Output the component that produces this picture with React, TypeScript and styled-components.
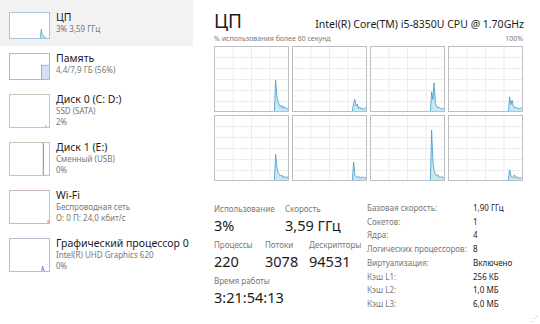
import styled, { createGlobalStyle } from "styled-components";

const GlobalStyle = createGlobalStyle`
  html, body {
    margin: 0;
    padding: 0;
    background: #ffffff;
  }
  body {
    font-family: "Noto Sans", "Open Sans", sans-serif;
    color: #1b1b1b;
  }
`;

type Thumb = "cpu" | "mem" | "disk0" | "disk1" | "wifi" | "gpu";

const sidebarItems: {
  kind: Thumb;
  title: string;
  lines: string[];
  border: string;
  selected?: boolean;
}[] = [
  { kind: "cpu", title: "ЦП", lines: ["3% 3,59 ГГц"], border: "#a9c4d8", selected: true },
  { kind: "mem", title: "Память", lines: ["4,4/7,9 ГБ (56%)"], border: "#b9b3cf" },
  { kind: "disk0", title: "Диск 0 (C: D:)", lines: ["SSD (SATA)", "2%"], border: "#bcc9b3" },
  { kind: "disk1", title: "Диск 1 (E:)", lines: ["Сменный (USB)", "0%"], border: "#bcc9b3" },
  { kind: "wifi", title: "Wi-Fi", lines: ["Беспроводная сеть", "О: 0 П: 24,0 кбит/с"], border: "#cdb9bd" },
  { kind: "gpu", title: "Графический процессор 0", lines: ["Intel(R) UHD Graphics 620", "0%"], border: "#c3b6cf" },
];

// last 12 seconds of each logical processor, percent
const charts: number[][] = [
  [0, 48, 24, 14, 10, 6, 9, 4, 7, 5, 3, 5],
  [0, 12, 18, 8, 11, 4, 6, 3, 5, 2, 4, 6],
  [0, 30, 18, 44, 12, 8, 5, 6, 4, 3, 5, 3],
  [0, 22, 10, 17, 8, 5, 6, 4, 5, 3, 4, 6],
  [0, 40, 20, 12, 9, 6, 8, 4, 6, 3, 5, 4],
  [0, 28, 8, 5, 4, 6, 3, 4, 5, 3, 4, 3],
  [0, 78, 30, 15, 10, 6, 8, 5, 4, 6, 3, 4],
  [0, 16, 7, 4, 5, 8, 3, 5, 4, 3, 4, 2],
];

const CoreChart = ({ data }: { data: number[] }) => {
  const w = 75;
  const h = 66;
  const step = w / 59;
  const start = 60 - data.length;
  const pts = data.map((v, i) => `${((start + i) * step).toFixed(2)},${(h - (v / 100) * h).toFixed(2)}`);
  const line = `0,${h} ${(start * step).toFixed(2)},${h} ${pts.join(" ")}`;
  return (
    <ChartBox>
      <svg width="100%" height="100%" viewBox={`0 0 ${w} ${h}`} preserveAspectRatio="none">
        <polygon points={`${line} ${w},${h}`} fill="#c9e7f4" />
        <polyline points={pts.join(" ")} fill="none" stroke="#3a97c2" strokeWidth="0.8" />
      </svg>
    </ChartBox>
  );
};

const ThumbDrawing = ({ kind }: { kind: Thumb }) => {
  switch (kind) {
    case "cpu":
      return (
        <svg width="100%" height="100%" viewBox="0 0 40 26" preserveAspectRatio="none">
          <polygon points="31,26 32,17 33,22 34,24 36,25 37,26" fill="#c9e7f4" />
          <polyline points="31,26 32,17 33,22 34,24 36,25 37,26" fill="none" stroke="#3a97c2" strokeWidth="0.7" />
        </svg>
      );
    case "mem":
      return (
        <svg width="100%" height="100%" viewBox="0 0 40 26" preserveAspectRatio="none">
          <rect x="32" y="11.5" width="8" height="14.5" fill="#d3e3f5" />
          <line x1="32.4" y1="11.5" x2="32.4" y2="26" stroke="#6f9fd6" strokeWidth="0.8" />
          <line x1="32" y1="11.8" x2="40" y2="11.8" stroke="#6f9fd6" strokeWidth="0.6" />
        </svg>
      );
    case "disk0":
      return (
        <svg width="100%" height="100%" viewBox="0 0 40 33" preserveAspectRatio="none">
          <rect x="36" y="31.5" width="1.2" height="1.5" fill="#7aa86a" />
        </svg>
      );
    case "disk1":
      return (
        <svg width="100%" height="100%" viewBox="0 0 40 32" preserveAspectRatio="none">
          <line x1="34.2" y1="0" x2="34.2" y2="32" stroke="#7db35a" strokeWidth="1.2" />
        </svg>
      );
    case "wifi":
      return (
        <svg width="100%" height="100%" viewBox="0 0 40 33" preserveAspectRatio="none">
          <rect x="38.6" y="30" width="0.9" height="3" fill="#c46a7a" />
        </svg>
      );
    case "gpu":
      return (
        <svg width="100%" height="100%" viewBox="0 0 40 32" preserveAspectRatio="none">
          <polygon points="32.5,32 33.5,27 34.5,31 36,32" fill="#e3d3f0" />
          <polyline points="32.5,32 33.5,27 34.5,31 36,32" fill="none" stroke="#9a63c4" strokeWidth="0.8" />
        </svg>
      );
  }
};

const details: [string, string][] = [
  ["Базовая скорость:", "1,90 ГГц"],
  ["Сокетов:", "1"],
  ["Ядра:", "4"],
  ["Логических процессоров:", "8"],
  ["Виртуализация:", "Включено"],
  ["Кэш L1:", "256 КБ"],
  ["Кэш L2:", "1,0 МБ"],
  ["Кэш L3:", "6,0 МБ"],
];

export default function App() {
  return (
    <>
      <GlobalStyle />
      <Page>
        <Sidebar>
          {sidebarItems.map((item) => (
            <SideItem key={item.title} $selected={!!item.selected}>
              <ThumbBox $border={item.border} $tall={item.lines.length > 1}>
                <ThumbDrawing kind={item.kind} />
              </ThumbBox>
              <SideText>
                <SideTitle>{item.title}</SideTitle>
                {item.lines.map((l) => (
                  <SideSub key={l}>{l}</SideSub>
                ))}
              </SideText>
            </SideItem>
          ))}
        </Sidebar>

        <Main>
          <Header>
            <Title>ЦП</Title>
            <Model>Intel(R) Core(TM) i5-8350U CPU @ 1.70GHz</Model>
          </Header>
          <Caption>
            <span>% использования более 60 секунд</span>
            <span>100%</span>
          </Caption>
          <ChartGrid>
            {charts.map((c, i) => (
              <CoreChart key={i} data={c} />
            ))}
          </ChartGrid>

          <Stats>
            <Live>
              <StatRow>
                <Stat $w={71}>
                  <StatLabel>Использование</StatLabel>
                  <StatValue>3%</StatValue>
                </Stat>
                <Stat>
                  <StatLabel>Скорость</StatLabel>
                  <StatValue>3,59 ГГц</StatValue>
                </Stat>
              </StatRow>
              <StatRow>
                <Stat $w={51}>
                  <StatLabel>Процессы</StatLabel>
                  <StatValue>220</StatValue>
                </Stat>
                <Stat $w={44}>
                  <StatLabel>Потоки</StatLabel>
                  <StatValue>3078</StatValue>
                </Stat>
                <Stat>
                  <StatLabel>Дескрипторы</StatLabel>
                  <StatValue>94531</StatValue>
                </Stat>
              </StatRow>
              <StatRow>
                <Stat>
                  <StatLabel>Время работы</StatLabel>
                  <StatValue>3:21:54:13</StatValue>
                </Stat>
              </StatRow>
            </Live>

            <Specs>
              {details.map(([k, v]) => (
                <SpecRow key={k}>
                  <SpecKey>{k}</SpecKey>
                  <SpecVal>{v}</SpecVal>
                </SpecRow>
              ))}
            </Specs>
          </Stats>
        </Main>
        <Grip>⋰</Grip>
      </Page>
    </>
  );
}

const Page = styled.div`
  position: relative;
  width: 540px;
  height: 324px;
  display: flex;
  overflow: hidden;
  background: #ffffff;
`;

const Sidebar = styled.nav`
  width: 193px;
  flex-shrink: 0;
  display: flex;
  flex-direction: column;
`;

const SideItem = styled.div<{ $selected: boolean }>`
  display: flex;
  align-items: flex-start;
  gap: 6px;
  padding: 7px 0 7px 9px;
  background: ${({ $selected }) => ($selected ? "#f2f2f2" : "transparent")};

  &:first-child {
    padding-top: 12px;
  }
`;

const ThumbBox = styled.div<{ $border: string; $tall: boolean }>`
  width: 41px;
  height: ${({ $tall }) => ($tall ? "34px" : "27px")};
  flex-shrink: 0;
  box-sizing: border-box;
  border: 1px solid ${({ $border }) => $border};
  background: #ffffff;
  display: flex;
`;

const SideText = styled.div`
  display: flex;
  flex-direction: column;
  margin-top: -2px;
  white-space: nowrap;
`;

const SideTitle = styled.div`
  font-size: 10.5px;
  line-height: 14px;
  color: #1b1b1b;
`;

const SideSub = styled.div`
  font-size: 8px;
  line-height: 10.5px;
  color: #777777;
`;

const Main = styled.main`
  flex: 1;
  display: flex;
  flex-direction: column;
  padding: 8px 16px 0 21px;
`;

const Header = styled.header`
  display: flex;
  justify-content: space-between;
  align-items: baseline;
`;

const Title = styled.h1`
  margin: 0;
  font-size: 19px;
  line-height: 26px;
  font-weight: 400;
  color: #1b1b1b;
`;

const Model = styled.div`
  font-size: 10.5px;
  color: #1b1b1b;
  white-space: nowrap;
`;

const Caption = styled.div`
  display: flex;
  justify-content: space-between;
  font-size: 7px;
  line-height: 10px;
  color: #7a7a7a;
  margin-right: 1px;
`;

const ChartGrid = styled.section`
  display: grid;
  grid-template-columns: repeat(4, 75px);
  grid-auto-rows: 66px;
  gap: 3px;
  margin-top: 2px;
`;

const ChartBox = styled.div`
  box-sizing: border-box;
  border: 1px solid #b9bfc3;
  display: flex;
  background-color: #ffffff;
  background-image: linear-gradient(to right, #ececec 1px, transparent 1px),
    linear-gradient(to bottom, #ececec 1px, transparent 1px);
  background-size: 18.5px 100%, 100% 11px;
  background-position: -1px 0, 0 -1px;
`;

const Stats = styled.section`
  display: flex;
  margin-top: 21px;
`;

const Live = styled.div`
  width: 153px;
  display: flex;
  flex-direction: column;
  gap: 3px;
`;

const StatRow = styled.div`
  display: flex;
`;

const Stat = styled.div<{ $w?: number }>`
  width: ${({ $w }) => ($w ? `${$w}px` : "auto")};
  display: flex;
  flex-direction: column;
  white-space: nowrap;
`;

const StatLabel = styled.div`
  font-size: 8px;
  line-height: 13px;
  color: #777777;
`;

const StatValue = styled.div`
  font-size: 14.5px;
  line-height: 20px;
  color: #1b1b1b;
`;

const Specs = styled.div`
  flex: 1;
  display: flex;
  flex-direction: column;
  margin-top: -1px;
`;

const SpecRow = styled.div`
  display: flex;
  font-size: 8px;
  line-height: 13.7px;
  white-space: nowrap;
`;

const SpecKey = styled.span`
  width: 106px;
  color: #777777;
`;

const SpecVal = styled.span`
  color: #1b1b1b;
`;

const Grip = styled.span`
  position: absolute;
  right: 2px;
  bottom: 1px;
  font-size: 7px;
  color: #9a9a9a;
`;
